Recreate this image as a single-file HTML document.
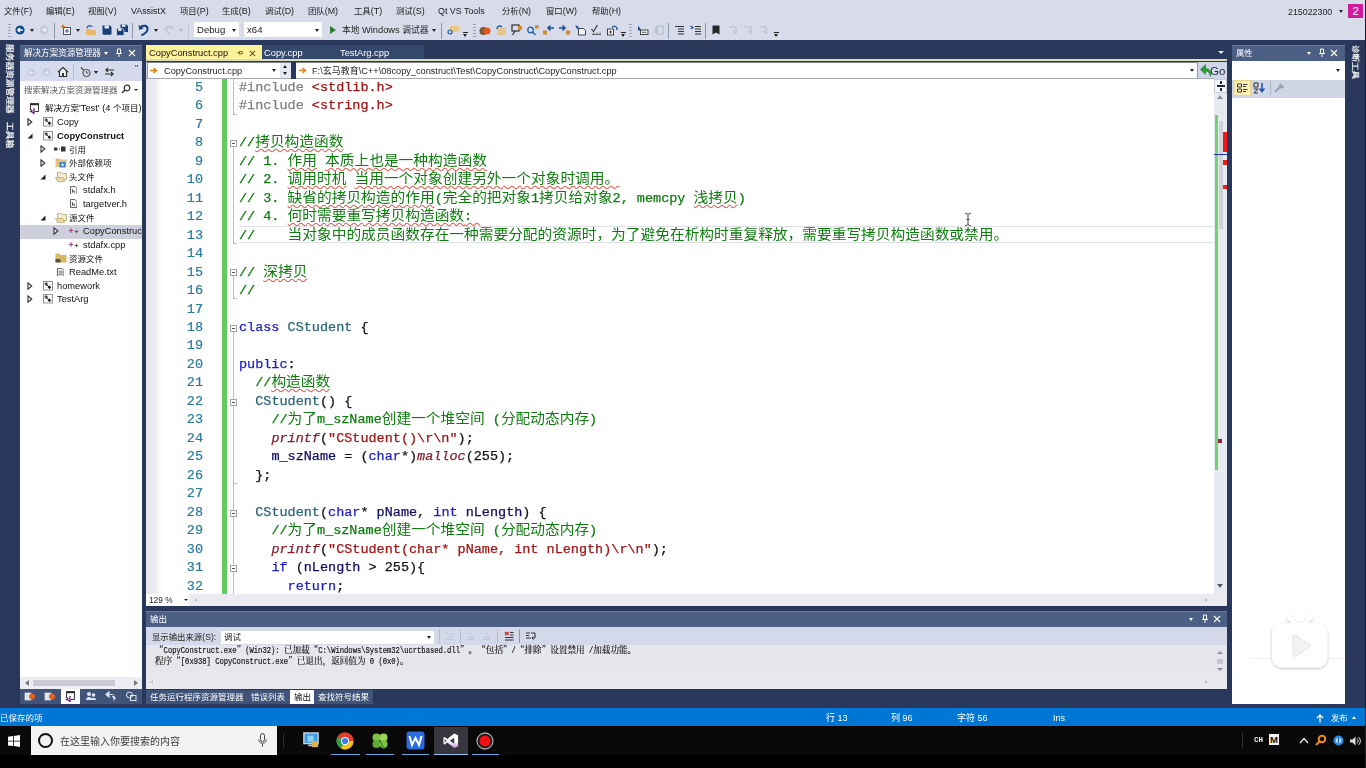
<!DOCTYPE html>
<html lang="zh-CN"><head><meta charset="utf-8"><title>CopyConstruct - Microsoft Visual Studio</title>
<style>

html,body{margin:0;padding:0}
body{width:1366px;height:768px;position:relative;overflow:hidden;background:#29375a;font-family:"Liberation Sans","Noto Sans CJK SC",sans-serif;font-size:9px;color:#1e1e1e;line-height:1}
div,span,svg{position:absolute;box-sizing:border-box}
#wrap{left:0;top:0;width:1366px;height:768px;overflow:hidden;filter:blur(0.45px)}
.t,.tree,.sb,.out,.menu{will-change:transform}
.t{white-space:nowrap;line-height:12px;height:12px}
.t span,.code span,.out span,.tree span,.sb span{position:static}
#top{left:0;top:0;width:1366px;height:40px;background:#d8dcea}
.menu{top:5px;font-size:8.9px;color:#1b1b1b}
.hdr{background:#4c5f84;color:#fff;border-top:1px solid #65789f}
.lav{background:#cfd6e5}
.white{background:#fff}
.code{left:239px;font-family:"Liberation Mono","Noto Sans CJK SC",monospace;font-size:12.45px;line-height:18.48px;height:18.48px;white-space:pre;color:#161616;-webkit-text-stroke:0.25px currentColor;transform:scaleX(1.0843);transform-origin:0 0}
.code .c{font-family:"Noto Sans CJK SC",sans-serif;font-size:13.57px;line-height:0;-webkit-text-stroke:0}
.ln{left:149.300px;width:54px;text-align:right;transform:scaleX(1.0843);transform-origin:100% 0;font-family:"Liberation Mono",monospace;font-size:12.45px;line-height:18.48px;height:18.48px;color:#2b7c9c;-webkit-text-stroke:0.2px currentColor}
.g{color:#0f7c0f}.k{color:#1c1cd4}.s{color:#a31515}.f{color:#87202c;font-style:italic}.ty{color:#2b6577}.v{color:#101068}.pp{color:#808080}
.sq{text-decoration:underline wavy #ea5a4e 0.9px;text-underline-offset:2px;text-decoration-skip-ink:none}
.tree{font-size:9.3px;color:#111;white-space:nowrap;line-height:13px;height:13px}
.out{font-family:"Liberation Mono","Noto Serif CJK SC",monospace;font-size:7.17px;color:#111;-webkit-text-stroke:0.15px #111;white-space:pre;line-height:11px;height:11px;transform:scaleY(1.18);transform-origin:0 55%}
.out .c{font-family:"Noto Serif CJK SC",serif;font-size:8.6px;line-height:9px;display:inline-block;transform:scaleY(0.847);transform-origin:0 62%;vertical-align:baseline}
.sb{color:#fff;font-size:9px;top:713px;white-space:nowrap;line-height:11px}

</style></head>
<body>
<div id="top">
<div class="t menu" style="left:4px"><span style="font-size:8.4px">文件</span>(F)</div>
<div class="t menu" style="left:46px"><span style="font-size:8.4px">编辑</span>(E)</div>
<div class="t menu" style="left:88px"><span style="font-size:8.4px">视图</span>(V)</div>
<div class="t menu" style="left:131px">VAssistX</div>
<div class="t menu" style="left:180px"><span style="font-size:8.4px">项目</span>(P)</div>
<div class="t menu" style="left:222px"><span style="font-size:8.4px">生成</span>(B)</div>
<div class="t menu" style="left:265px"><span style="font-size:8.4px">调试</span>(D)</div>
<div class="t menu" style="left:308px"><span style="font-size:8.4px">团队</span>(M)</div>
<div class="t menu" style="left:354px"><span style="font-size:8.4px">工具</span>(T)</div>
<div class="t menu" style="left:396px"><span style="font-size:8.4px">测试</span>(S)</div>
<div class="t menu" style="left:438px">Qt VS Tools</div>
<div class="t menu" style="left:502px"><span style="font-size:8.4px">分析</span>(N)</div>
<div class="t menu" style="left:546px"><span style="font-size:8.4px">窗口</span>(W)</div>
<div class="t menu" style="left:592px"><span style="font-size:8.4px">帮助</span>(H)</div>
<div class="t" style="left:1288px;top:5.700px;font-size:8.850px">215022300</div>
<div style="left:1338.600px;top:10px;border:2.5px solid transparent;border-top:3px solid #222"></div>
<div style="left:1348.400px;top:3.500px;width:14.400px;height:14.200px;background:#cf1a9c;color:#fff;font-size:11.500px;line-height:14.500px;text-align:center">2</div>
<div style="left:0;top:0.7px;width:1366px;height:39px">
<div style="left:8px;top:23px;width:3px;height:14px;background:repeating-linear-gradient(#9aa3b8 0 1px,transparent 1px 3px)"></div>
<svg style="left:15px;top:24px" width="10" height="10" viewBox="0 0 10 10"><circle cx="5" cy="5" r="4.6" fill="#0e4f8f"/><path d="M7.6 5H3M4.8 3L2.8 5l2 2" stroke="#fff" stroke-width="1.4" fill="none"/></svg>
<div class="dd" style="left:30px;top:28px;border:2.5px solid transparent;border-top:3px solid #222"></div>
<svg style="left:39px;top:24px" width="10" height="10" viewBox="0 0 10 10"><circle cx="5" cy="5" r="4.4" fill="#c3c8d6"/><path d="M2.4 5H7M5.2 3l2 2-2 2" stroke="#e6e9f2" stroke-width="1.4" fill="none"/></svg>
<div style="left:54px;top:22px;width:1px;height:16px;background:#8e97ab"></div>
<svg style="left:61px;top:23px" width="12" height="12" viewBox="0 0 12 12"><rect x="2.5" y="3.5" width="7" height="7" fill="#f4f6fb" stroke="#4a5568"/><path d="M2 0.5v4M0 2.5h4" stroke="#c27a1a" stroke-width="1.2"/><path d="M4 7h4M6 5v4" stroke="#4a5568" stroke-width="1"/></svg>
<div style="left:76px;top:28px;border:2.5px solid transparent;border-top:3px solid #222"></div>
<svg style="left:85px;top:23px" width="12" height="12" viewBox="0 0 12 12"><path d="M1 5h4l1 1h5v5H1z" fill="#e8b96a"/><path d="M2 4c1-3 4-3 5-1" stroke="#1c5fa8" stroke-width="1.4" fill="none"/></svg>
<svg style="left:102px;top:24px" width="10" height="10" viewBox="0 0 10 10"><path d="M0.5 0.5h7.5l1.5 1.5v7.5h-9z" fill="#153e7a"/><rect x="2.5" y="0.5" width="4.5" height="3" fill="#dfe5f3"/><rect x="2" y="5.5" width="6" height="4" fill="#153e7a"/></svg>
<svg style="left:116px;top:23px" width="13" height="12" viewBox="0 0 13 12"><path d="M4.5 0.5h6l1.5 1.5v6h-7.5z" fill="#153e7a"/><rect x="6" y="0.5" width="3.5" height="2.4" fill="#dfe5f3"/><path d="M0.5 4.5h6l1.5 1.5v5.500h-7.5z" fill="#153e7a" stroke="#d8dcea" stroke-width=".8"/><rect x="2.200" y="4.800" width="3.300" height="2.200" fill="#dfe5f3"/></svg>
<div style="left:132px;top:22px;width:1px;height:16px;background:#8e97ab"></div>
<svg style="left:138px;top:23px" width="12" height="13" viewBox="0 0 12 13"><path d="M2.500 3.200C5 0.500 10 1.500 9.500 5.500 9.200 8.500 6 10 3.500 11.500" stroke="#153e7a" stroke-width="2" fill="none"/><path d="M0.500 1l0.800 5 4.500-1.800z" fill="#153e7a"/></svg>
<div style="left:154px;top:28px;border:2.5px solid transparent;border-top:3px solid #222"></div>
<svg style="left:164px;top:24px" width="10" height="11" viewBox="0 0 12 13"><path d="M9.500 3.200C7 0.500 2 1.500 2.500 5.500 2.800 8.500 6 10 8.500 11.500" stroke="#c0c6d6" stroke-width="2" fill="none"/><path d="M11.500 1l-0.800 5-4.500-1.800z" fill="#c0c6d6"/></svg>
<div style="left:179px;top:28px;border:2.5px solid transparent;border-top:3px solid #a9afbf"></div>
<div style="left:188px;top:22px;width:1px;height:16px;background:#c3c9d8"></div>
<div style="left:194px;top:21.300px;width:45px;height:15.500px;background:#fff"></div>
<div class="t" style="left:197px;top:23.200px;font-size:9.6px">Debug</div>
<div style="left:232px;top:28px;border:2.5px solid transparent;border-top:3px solid #222"></div>
<div style="left:244px;top:21.300px;width:78px;height:15.500px;background:#fff"></div>
<div class="t" style="left:247px;top:23.200px;font-size:9.6px">x64</div>
<div style="left:315px;top:28px;border:2.5px solid transparent;border-top:3px solid #222"></div>
<div style="left:330px;top:25px;border:4px solid transparent;border-left:6px solid #2f7d32;border-right:0"></div>
<div class="t" style="left:342px;top:23.300px;font-size:9.3px"><span style="font-size:8.7px">本地</span> Windows <span style="font-size:8.7px">调试器</span></div>
<div style="left:432px;top:28px;border:2.5px solid transparent;border-top:3px solid #222"></div>
<div style="left:441px;top:22px;width:1px;height:16px;background:#8e97ab"></div>
<svg style="left:447px;top:23px" width="13" height="12" viewBox="0 0 13 12"><rect x="3" y="2" width="9" height="6" fill="#e8c98a"/><circle cx="3" cy="8" r="2" fill="none" stroke="#1c5fa8" stroke-width="1.2"/></svg>
<div style="left:463px;top:31px;width:5px;height:1px;background:#222"></div><div style="left:463px;top:33px;border:2.5px solid transparent;border-top:3px solid #222"></div>
<div style="left:473px;top:23px;width:3px;height:14px;background:repeating-linear-gradient(#9aa3b8 0 1px,transparent 1px 3px)"></div>
<svg style="left:479px;top:24px" width="12" height="11" viewBox="0 0 12 11"><circle cx="4.500" cy="6" r="4" fill="#7a5a3a"/><circle cx="8" cy="6" r="3.500" fill="#e2561e"/></svg>
<svg style="left:495px;top:23px" width="12" height="12" viewBox="0 0 12 12"><rect x="2" y="4" width="9" height="7" fill="#e8c58c"/><path d="M2 5c0-3 3-4 5-2" stroke="#1c5fa8" stroke-width="1.500" fill="none"/></svg>
<svg style="left:511px;top:23px" width="12" height="12" viewBox="0 0 12 12"><rect x="1" y="1" width="7" height="6" fill="none" stroke="#333" stroke-width="1.200"/><rect x="7" y="2" width="4" height="4" fill="#d08a2a"/><path d="M4 7L1.500 11" stroke="#333" stroke-width="1.300"/></svg>
<svg style="left:526px;top:23px" width="13" height="12" viewBox="0 0 13 12"><circle cx="4.500" cy="6" r="2.800" fill="none" stroke="#1c5fa8" stroke-width="1.300"/><path d="M6.500 8l3 3" stroke="#1c5fa8" stroke-width="1.400"/><rect x="9" y="1" width="3.500" height="3.500" fill="#d08a2a"/></svg>
<svg style="left:542px;top:23px" width="13" height="12" viewBox="0 0 13 12"><rect x="1" y="6.500" width="4" height="4" fill="#d08a2a"/><path d="M12 4H6.500M8.500 1.500L6 4l2.500 2.500" stroke="#1c4f9a" stroke-width="1.600" fill="none"/></svg>
<svg style="left:558px;top:23px" width="13" height="12" viewBox="0 0 13 12"><rect x="8" y="6.500" width="4" height="4" fill="#d08a2a"/><path d="M1 4h5.500M4.500 1.500L7 4 4.500 6.500" stroke="#1c4f9a" stroke-width="1.600" fill="none"/></svg>
<svg style="left:574px;top:23px" width="13" height="12" viewBox="0 0 13 12"><path d="M4.500 4.500h5l2 2v4.500h-7z" fill="#f2f4fa" stroke="#333" stroke-width=".9"/><path d="M1 1l2 4 2-2z" fill="#1c4f9a"/><path d="M2.500 2.500L5 6" stroke="#1c4f9a" stroke-width="1.200"/></svg>
<svg style="left:590px;top:23px" width="13" height="12" viewBox="0 0 13 12"><path d="M1.500 5l2 2.500 4-6.500" stroke="#3a3a3a" stroke-width="1.200" fill="none"/><path d="M2 10.500h9M4 8.500v2M7 8.500v2M10 8.500v2" stroke="#555" stroke-width=".9"/></svg>
<svg style="left:606px;top:23px" width="13" height="12" viewBox="0 0 13 12"><rect x="1.500" y="5" width="6" height="6" fill="#f2f4fa" stroke="#333" stroke-width=".9"/><path d="M3 8h3M4.500 6.500v3" stroke="#333" stroke-width=".9"/><path d="M6 3.500c2-2.500 5.500-1 5 2.500" stroke="#1c4f9a" stroke-width="1.300" fill="none"/></svg>
<div style="left:621px;top:31px;width:5px;height:1px;background:#222"></div><div style="left:621px;top:33px;border:2.5px solid transparent;border-top:3px solid #222"></div>
<div style="left:629px;top:23px;width:3px;height:14px;background:repeating-linear-gradient(#9aa3b8 0 1px,transparent 1px 3px)"></div>
<svg style="left:637px;top:24px" width="12" height="11" viewBox="0 0 12 11"><path d="M1 0.500l3.500 5h-3.500z" fill="#1c4f9a"/><rect x="3.500" y="5" width="7.500" height="4.500" fill="#f2f4fa" stroke="#333" stroke-width=".9"/><path d="M5 7.300h4.500" stroke="#333" stroke-width=".8"/></svg>
<svg style="left:653px;top:24px" width="12" height="11" viewBox="0 0 12 11" opacity=".45"><rect x="4" y="1" width="6" height="8" fill="none" stroke="#7c8499" stroke-width=".9"/><path d="M1 3h4M1 5h4M1 7h4" stroke="#7c8499" stroke-width=".9"/></svg>
<div style="left:668px;top:22px;width:1px;height:16px;background:#8e97ab"></div>
<svg style="left:674px;top:24px" width="11" height="10" viewBox="0 0 11 10"><path d="M1 1.500h9M4 4h6M4 6.500h6M4 9h6" stroke="#333" stroke-width="1"/></svg>
<svg style="left:690px;top:24px" width="12" height="10" viewBox="0 0 12 10"><path d="M5 1.500h6M5 4h6M5 6.500h6M5 9h6" stroke="#333" stroke-width="1"/><path d="M0.500 1l2.500 1.500L1 4" stroke="#1c4f9a" stroke-width="1.200" fill="none"/></svg>
<div style="left:705px;top:22px;width:1px;height:16px;background:#8e97ab"></div>
<svg style="left:712px;top:24px" width="8" height="10" viewBox="0 0 8 10"><path d="M0.500 0.500h7v9L4 7.500 0.500 9.500z" fill="#252525"/></svg>
<svg style="left:728px;top:25px" width="10" height="8" viewBox="0 0 10 8" opacity=".5"><path d="M1 1h7v6L5 5" stroke="#9aa1b4" stroke-width="1.200" fill="none"/></svg>
<svg style="left:743px;top:25px" width="10" height="8" viewBox="0 0 10 8" opacity=".5"><path d="M1 1h7v6L5 5" stroke="#9aa1b4" stroke-width="1.200" fill="none"/></svg>
<svg style="left:758px;top:25px" width="10" height="8" viewBox="0 0 10 8" opacity=".5"><path d="M1 1h7v6L5 5" stroke="#9aa1b4" stroke-width="1.200" fill="none"/></svg>
<div style="left:774px;top:31px;width:5px;height:1px;background:#222"></div><div style="left:774px;top:33px;border:2.5px solid transparent;border-top:3px solid #222"></div>
</div></div>
<div style="left:0;top:40px;width:20px;height:668px;background:#29375a"></div>
<div class="t" style="left:14.800px;top:44px;transform:rotate(90deg) scale(1,0.88);transform-origin:0 0;color:#fff;-webkit-text-stroke:.25px #fff;font-size:8.7px">服务器资源管理器</div>
<div class="t" style="left:14.800px;top:122px;transform:rotate(90deg) scale(1,0.88);transform-origin:0 0;color:#fff;-webkit-text-stroke:.25px #fff;font-size:8.7px">工具箱</div>
<div class="hdr" style="left:20px;top:45px;width:122px;height:16px"></div>
<div class="t" style="left:24px;top:47px;color:#fff;font-size:8.55px">解决方案资源管理器</div>
<div style="left:104px;top:52px;border:2.5px solid transparent;border-top:3px solid #fff"></div>
<svg style="left:115px;top:48px" width="8" height="10" viewBox="0 0 8 10"><path d="M2.500 1h3v4.500h-3zM1 5.500h6M4 5.500v3.500" stroke="#fff" stroke-width="1" fill="none"/></svg>
<svg style="left:128px;top:49px" width="8" height="8" viewBox="0 0 8 8"><path d="M1 1l6 6M7 1l-6 6" stroke="#fff" stroke-width="1.100"/></svg>
<div class="lav" style="left:20px;top:60.700px;width:122px;height:20.500px;background:#d5dbec"></div>
<svg style="left:27px;top:68px" width="9" height="9" viewBox="0 0 10 10"><circle cx="5" cy="5" r="4.200" fill="#c5cad8"/><path d="M7.400 5H3M4.800 3L2.800 5l2 2" stroke="#e9ecf4" stroke-width="1.300" fill="none"/></svg>
<svg style="left:42px;top:68px" width="9" height="9" viewBox="0 0 10 10"><circle cx="5" cy="5" r="4.200" fill="#c5cad8"/><path d="M2.600 5H7M5.200 3l2 2-2 2" stroke="#e9ecf4" stroke-width="1.300" fill="none"/></svg>
<svg style="left:57px;top:66px" width="12" height="11" viewBox="0 0 12 11"><path d="M1 6l5-4.500L11 6M2.500 5.500v5h7v-5" stroke="#333" stroke-width="1.200" fill="#f5f6fa"/><rect x="5" y="7" width="2" height="3.500" fill="#333"/></svg>
<div style="left:73px;top:64px;width:1px;height:15px;background:#b4bccd"></div>
<svg style="left:80px;top:66px" width="12" height="12" viewBox="0 0 12 12"><circle cx="6.500" cy="7" r="3.600" fill="none" stroke="#444" stroke-width="1"/><path d="M6.500 5v2h1.800" stroke="#444" stroke-width=".9" fill="none"/><path d="M1 1.500l2.500 2.500" stroke="#444" stroke-width="1.200"/></svg>
<div style="left:94px;top:71px;border:2.5px solid transparent;border-top:3px solid #222"></div>
<svg style="left:104px;top:67px" width="11" height="10" viewBox="0 0 11 10"><path d="M10 3H2M4 1L2 3l2 2M1 7h8M7 5l2 2-2 2" stroke="#333" stroke-width="1.200" fill="none"/></svg>
<div class="t" style="left:135px;top:62px;font-size:9px;color:#333">"</div>
<div class="white" style="left:20px;top:81px;width:122px;height:16.500px;border-bottom:1px solid #d5dae6"></div>
<div class="t" style="left:24px;top:84px;font-size:8.500px;color:#5a5a5a">搜索解决方案资源管理器</div>
<svg style="left:120.800px;top:84px" width="10" height="10" viewBox="0 0 10 10"><circle cx="6" cy="4" r="2.800" fill="none" stroke="#333" stroke-width="1.200"/><path d="M4 6L1 9" stroke="#333" stroke-width="1.500"/></svg>
<div style="left:134px;top:89px;border:2px solid transparent;border-top:2.500px solid #222"></div>
<div class="white" style="left:20px;top:97px;width:122px;height:581px"></div>
<div style="left:20px;top:224.500px;width:122px;height:14px;background:#cdd0dc"></div>
<div style="left:21px;top:97px;width:121px;height:581px;overflow:hidden">
<svg style="left:8.3px;top:5.7px" width="11" height="11" viewBox="0 0 11 11"><path d="M1.500 6V1h8v7.500H6" fill="#fff" stroke="#3a3a3a" stroke-width="1"/><path d="M1 1.200h9" stroke="#2a2a2a" stroke-width="2"/><path d="M0.800 6l2 1.500-2 1.500M5 5v5.500L2.500 8.500" stroke="#68217a" stroke-width="1.300" fill="none"/></svg>
<div class="tree" style="left:23.5px;top:5.4px;"><span style="font-size:8.5px">解决方案</span>'Test' (4 <span style="font-size:8.5px">个项目</span>)</div>
<svg style="left:6px;top:21.0px" width="6" height="8" viewBox="0 0 6 8"><path d="M1 0.800L4.800 4 1 7.200z" fill="#fff" stroke="#2e2e2e" stroke-width="1.100"/></svg>
<svg style="left:21.8px;top:20.0px" width="10" height="10" viewBox="0 0 10 10"><rect x="0.500" y="0.500" width="9" height="8.500" fill="#fff" stroke="#8a8a8a" stroke-width=".9"/><path d="M1.500 3h3.400M3.200 1.300v3.400M4.800 6.300h3.400M6.500 4.600v3.400" stroke="#222" stroke-width="1.200"/><path d="M3.500 3.500l3 3" stroke="#222" stroke-width=".9"/></svg>
<div class="tree" style="left:36.0px;top:19.2px;">Copy</div>
<svg style="left:6px;top:35.8px" width="6" height="6" viewBox="0 0 6 6"><path d="M5.500 0.500v5h-5z" fill="#222"/></svg>
<svg style="left:21.8px;top:33.8px" width="10" height="10" viewBox="0 0 10 10"><rect x="0.500" y="0.500" width="9" height="8.500" fill="#fff" stroke="#8a8a8a" stroke-width=".9"/><path d="M1.500 3h3.400M3.200 1.300v3.400M4.800 6.300h3.400M6.500 4.600v3.400" stroke="#222" stroke-width="1.200"/><path d="M3.500 3.500l3 3" stroke="#222" stroke-width=".9"/></svg>
<div class="tree" style="left:36.0px;top:33.0px;font-weight:bold;">CopyConstruct</div>
<svg style="left:19px;top:48.3px" width="6" height="8" viewBox="0 0 6 8"><path d="M1 0.800L4.800 4 1 7.200z" fill="#fff" stroke="#2e2e2e" stroke-width="1.100"/></svg>
<svg style="left:33px;top:49.3px" width="12" height="6" viewBox="0 0 12 6"><rect x="0" y="1.500" width="3" height="3" fill="#333"/><rect x="7" y="0.500" width="4.500" height="5" fill="#333"/><path d="M3 3h4" stroke="#333" stroke-width="1" stroke-dasharray="1 1"/></svg>
<div class="tree" style="left:47.9px;top:46.5px;"><span style="font-size:8.5px">引用</span></div>
<svg style="left:19px;top:61.9px" width="6" height="8" viewBox="0 0 6 8"><path d="M1 0.800L4.800 4 1 7.200z" fill="#fff" stroke="#2e2e2e" stroke-width="1.100"/></svg>
<svg style="left:34px;top:60.4px" width="12" height="11" viewBox="0 0 12 11"><path d="M0.500 1.500h4l1 1h6v7.500h-11z" fill="#e4c27e"/><rect x="4.500" y="5" width="6" height="5.500" fill="#3b82c4"/><path d="M6 7.800h3M7.500 6.300v3" stroke="#fff" stroke-width=".9"/></svg>
<div class="tree" style="left:47.9px;top:60.1px;"><span style="font-size:8.5px">外部依赖项</span></div>
<svg style="left:19px;top:76.6px" width="6" height="6" viewBox="0 0 6 6"><path d="M5.500 0.500v5h-5z" fill="#222"/></svg>
<svg style="left:34px;top:74.6px" width="12" height="10" viewBox="0 0 12 10"><path d="M2.500 0.500h4l1 1h4v6h-9z" fill="#f3ead3" stroke="#b9a36a" stroke-width=".8"/><path d="M0.500 5.500l2 4h7l-1.500-4z" fill="#e9d9a6" stroke="#b9a36a" stroke-width=".7"/></svg>
<div class="tree" style="left:47.9px;top:73.8px;"><span style="font-size:8.5px">头文件</span></div>
<svg style="left:48.7px;top:88.6px" width="7.500" height="8.800" viewBox="0 0 9 11"><path d="M0.500 0.500h5.500l2.500 2.500v7.500h-8z" fill="#fff" stroke="#444" stroke-width="1.100"/><path d="M3 4v4.500M3 6.500h2.500v2" stroke="#444" stroke-width="1.100" fill="none"/></svg>
<div class="tree" style="left:61.7px;top:87.4px;">stdafx.h</div>
<svg style="left:48.7px;top:102.3px" width="7.500" height="8.800" viewBox="0 0 9 11"><path d="M0.500 0.500h5.500l2.500 2.500v7.500h-8z" fill="#fff" stroke="#444" stroke-width="1.100"/><path d="M3 4v4.500M3 6.500h2.500v2" stroke="#444" stroke-width="1.100" fill="none"/></svg>
<div class="tree" style="left:61.7px;top:101.1px;">targetver.h</div>
<svg style="left:19px;top:117.5px" width="6" height="6" viewBox="0 0 6 6"><path d="M5.500 0.500v5h-5z" fill="#222"/></svg>
<svg style="left:34px;top:115.5px" width="12" height="10" viewBox="0 0 12 10"><path d="M2.500 0.500h4l1 1h4v6h-9z" fill="#f3ead3" stroke="#b9a36a" stroke-width=".8"/><path d="M0.500 5.500l2 4h7l-1.500-4z" fill="#e9d9a6" stroke="#b9a36a" stroke-width=".7"/></svg>
<div class="tree" style="left:47.9px;top:114.7px;"><span style="font-size:8.5px">源文件</span></div>
<svg style="left:32px;top:130.1px" width="6" height="8" viewBox="0 0 6 8"><path d="M1 0.800L4.800 4 1 7.200z" fill="#fff" stroke="#2e2e2e" stroke-width="1.100"/></svg>
<svg style="left:47px;top:130.1px" width="12" height="8" viewBox="0 0 12 8"><path d="M3 1.200v4.600M0.700 3.500h4.600" stroke="#9a4a86" stroke-width="1.200"/><path d="M8.500 2.700v3.600M6.700 4.500h3.600" stroke="#666" stroke-width="1.100"/></svg>
<div class="tree" style="left:61.7px;top:128.3px;">CopyConstruct.cpp</div>
<svg style="left:47px;top:143.8px" width="12" height="8" viewBox="0 0 12 8"><path d="M3 1.200v4.600M0.700 3.500h4.600" stroke="#9a4a86" stroke-width="1.200"/><path d="M8.500 2.700v3.600M6.700 4.500h3.600" stroke="#666" stroke-width="1.100"/></svg>
<div class="tree" style="left:61.7px;top:142.0px;">stdafx.cpp</div>
<svg style="left:34px;top:156.4px" width="12" height="10" viewBox="0 0 12 10"><path d="M0.500 0.500h4l1 1.500h6v7.500h-11z" fill="#dcb765"/><path d="M0.500 6h5v3.500h-5z" fill="#555"/></svg>
<div class="tree" style="left:47.9px;top:155.6px;"><span style="font-size:8.5px">资源文件</span></div>
<svg style="left:35.7px;top:170.6px" width="7.500" height="8.800" viewBox="0 0 9 11"><path d="M0.500 0.500h5.500l2.500 2.500v7.500h-8z" fill="#fff" stroke="#444" stroke-width="1.100"/><path d="M2 4h5M2 6h5M2 8h5" stroke="#444" stroke-width=".9"/></svg>
<div class="tree" style="left:47.9px;top:169.2px;">ReadMe.txt</div>
<svg style="left:6px;top:184.6px" width="6" height="8" viewBox="0 0 6 8"><path d="M1 0.800L4.800 4 1 7.200z" fill="#fff" stroke="#2e2e2e" stroke-width="1.100"/></svg>
<svg style="left:21.8px;top:183.6px" width="10" height="10" viewBox="0 0 10 10"><rect x="0.500" y="0.500" width="9" height="8.500" fill="#fff" stroke="#8a8a8a" stroke-width=".9"/><path d="M1.500 3h3.400M3.200 1.300v3.400M4.800 6.300h3.400M6.500 4.600v3.400" stroke="#222" stroke-width="1.200"/><path d="M3.500 3.500l3 3" stroke="#222" stroke-width=".9"/></svg>
<div class="tree" style="left:36.0px;top:182.8px;">homework</div>
<svg style="left:6px;top:198.2px" width="6" height="8" viewBox="0 0 6 8"><path d="M1 0.800L4.800 4 1 7.200z" fill="#fff" stroke="#2e2e2e" stroke-width="1.100"/></svg>
<svg style="left:21.8px;top:197.2px" width="10" height="10" viewBox="0 0 10 10"><rect x="0.500" y="0.500" width="9" height="8.500" fill="#fff" stroke="#8a8a8a" stroke-width=".9"/><path d="M1.500 3h3.400M3.200 1.300v3.400M4.800 6.300h3.400M6.500 4.600v3.400" stroke="#222" stroke-width="1.200"/><path d="M3.500 3.500l3 3" stroke="#222" stroke-width=".9"/></svg>
<div class="tree" style="left:36.0px;top:196.4px;">TestArg</div>
</div>
<div style="left:20px;top:677px;width:122px;height:12px;background:#edeef4"></div>
<div style="left:33px;top:679.500px;width:82px;height:6px;background:#c9cad3"></div>
<div style="left:25px;top:679.500px;border:3px solid transparent;border-right:4px solid #777;border-left:0"></div>
<div style="left:134px;top:679.500px;border:3px solid transparent;border-left:4px solid #777;border-right:0"></div>
<div style="left:20px;top:689px;width:122px;height:14.800px;background:#3f5478"></div>
<div style="left:61px;top:689px;width:19.300px;height:14.800px;background:#fff"></div>

<svg style="left:24px;top:691px" width="12" height="10" viewBox="0 0 12 10"><rect x="1" y="2" width="6" height="7" fill="#dfe3ee" stroke="#f0f0f0" stroke-width=".6"/><circle cx="8" cy="5.500" r="3" fill="#e2622a"/></svg>
<svg style="left:44px;top:691px" width="12" height="10" viewBox="0 0 12 10"><rect x="1" y="2" width="6" height="7" fill="#dfe3ee" stroke="#f0f0f0" stroke-width=".6"/><circle cx="8" cy="5.500" r="3" fill="#e2622a"/></svg>
<svg style="left:65px;top:691px" width="11" height="11" viewBox="0 0 11 11"><path d="M1.500 6V1h8v7.500H6" fill="#fff" stroke="#3a3a3a" stroke-width="1"/><path d="M1 1.200h9" stroke="#2a2a2a" stroke-width="2"/><path d="M0.800 6l2 1.500-2 1.500M5 5v5.500L2.500 8.500" stroke="#68217a" stroke-width="1.300" fill="none"/></svg>
<svg style="left:85px;top:691px" width="12" height="10" viewBox="0 0 12 10"><circle cx="4" cy="3" r="2" fill="#dfe6f5"/><circle cx="8.500" cy="4" r="1.800" fill="#dfe6f5"/><path d="M1 9c0-4 6-4 6 0zM6 9c0-3 5-3 5 0z" fill="#dfe6f5"/></svg>
<svg style="left:105px;top:691px" width="12" height="10" viewBox="0 0 12 10"><path d="M1 3.500l3-2.500v5zM5 3.500h3M7 5.500l4 2M9 4.500v5" stroke="#dfe6f5" stroke-width="1.200" fill="#dfe6f5"/></svg>
<svg style="left:125px;top:691px" width="12" height="10" viewBox="0 0 12 10"><circle cx="4.500" cy="4" r="3" fill="none" stroke="#dfe6f5" stroke-width="1"/><rect x="5.500" y="4.500" width="5.500" height="5" fill="none" stroke="#dfe6f5" stroke-width="1"/></svg>
<div style="left:262px;top:45px;width:162px;height:15px;background:#33486b"></div>
<div style="left:146px;top:44.500px;width:115.500px;height:16px;background:#fff29d"></div>
<div class="t" style="left:149px;top:47px;font-size:9.300px;color:#111">CopyConstruct.cpp</div>
<svg style="left:236.500px;top:50px" width="6.500" height="5.500" viewBox="0 0 8 6"><path d="M0 3h3M3 1v4M3 1.500h3.500v3H3" stroke="#6a5c1c" stroke-width="1.100" fill="none"/></svg>
<svg style="left:249.200px;top:49.500px" width="7" height="7" viewBox="0 0 8 8"><path d="M1 1l6 6M7 1l-6 6" stroke="#5f5424" stroke-width="1.200"/></svg>
<div class="t" style="left:264px;top:47px;font-size:9.300px;color:#fff">Copy.cpp</div>
<div class="t" style="left:340px;top:47px;font-size:9.300px;color:#fff">TestArg.cpp</div>
<div style="left:1218px;top:51px;border:3px solid transparent;border-top:3.500px solid #dfe5f2"></div>
<div style="left:146px;top:59.300px;width:1081.200px;height:2.200px;background:#dddcb8"></div>
<div style="left:146px;top:61.500px;width:1081.200px;height:18px;background:#cfd6e5"></div>
<div style="left:146px;top:78.300px;width:1068px;height:1.400px;background:#a4a9b4"></div>
<div style="left:146.500px;top:61.500px;width:133px;height:16.800px;background:#fff;border-left:1px solid #8e99ad;border-top:1px solid #7d8595"></div>
<div style="left:279.500px;top:61.500px;width:11.700px;height:16.800px;background:#e6e9f2;border-top:1px solid #7d8595"></div>
<div style="left:291.200px;top:61.500px;width:4.400px;height:18px;background:#2b3660"></div>
<div style="left:283px;top:65px;border:2.500px solid transparent;border-bottom:3px solid #222;border-top:0"></div>
<div style="left:283px;top:72.300px;border:2.500px solid transparent;border-top:3px solid #222;border-bottom:0"></div>
<div style="left:295.600px;top:61.500px;width:902.400px;height:16.800px;background:#fff;border-top:1px solid #7d8595;border-right:1px solid #8e99ad"></div>
<div style="left:271.500px;top:69px;border:2.500px solid transparent;border-top:3px solid #222"></div>
<svg style="left:150px;top:67px" width="8" height="7" viewBox="0 0 8 7"><path d="M0 3.500h6M3.500 1L6.500 3.500 3.500 6" stroke="#d8841c" stroke-width="1.400" fill="none"/></svg>
<div class="t" style="left:164px;top:65px;font-size:9.200px">CopyConstruct.cpp</div>
<svg style="left:299px;top:67px" width="8" height="7" viewBox="0 0 8 7"><path d="M0 3.500h6M3.500 1L6.500 3.500 3.500 6" stroke="#d8841c" stroke-width="1.400" fill="none"/></svg>
<div class="t" style="left:312px;top:65px;font-size:9.200px">F:\<span style="font-size:9px">玄马教育</span>\C++\08copy_construct\Test\CopyConstruct\CopyConstruct.cpp</div>
<div style="left:1190px;top:69px;border:2.500px solid transparent;border-top:3px solid #222"></div>
<svg style="left:1199.500px;top:63px" width="12" height="14" viewBox="0 0 12 14"><path d="M10.500 13.500C11.500 8.500 9.500 5.500 5.500 5.500V1.500L0.500 6.500l5 5V8C8 8 9.500 10 10.500 13.500z" fill="#2e9a36" stroke="#1f7a28" stroke-width=".6"/></svg>
<div class="t" style="left:1210px;top:64px;font-size:11.500px;color:#1e2a44;line-height:14px;height:14px">Go</div>
<div id="codebg" style="left:146px;top:79px;width:1068px;height:514.5px;background:#fff"></div>
<div style="left:146px;top:79px;width:16px;height:514.5px;background:linear-gradient(90deg,#e6e7ee 0,#ececf2 55%,#fff 100%)"></div>
<div style="left:222px;top:79px;width:5px;height:514.5px;background:#62cc62"></div>
<div id="code" style="left:0;top:79px;width:1214px;height:514.5px;overflow:hidden">
<div style="left:239px;top:147.00px;width:975px;height:16.60px;border:1px solid #e0e0e6;border-right:0;border-left:0"></div>
<div class="ln" style="top:-0.24px">5</div><div class="code" style="top:-0.24px"><span class="pp">#include</span> <span class="s">&lt;stdlib.h&gt;</span></div>
<div class="ln" style="top:18.24px">6</div><div class="code" style="top:18.24px"><span class="pp">#include</span> <span class="s">&lt;string.h&gt;</span></div>
<div class="ln" style="top:36.72px">7</div>
<div class="ln" style="top:55.20px">8</div><div class="code" style="top:55.20px"><span class="g">//<span class="sq"><span class="c">拷贝构造函数</span></span></span></div>
<div class="ln" style="top:73.68px">9</div><div class="code" style="top:73.68px"><span class="g">// 1. <span class="sq"><span class="c">作用</span></span> <span class="sq"><span class="c">本质上也是一种构造函数</span></span></span></div>
<div class="ln" style="top:92.16px">10</div><div class="code" style="top:92.16px"><span class="g">// 2. <span class="sq"><span class="c">调用时机</span></span> <span class="sq"><span class="c">当用一个对象创建另外一个对象时调用。</span></span></span></div>
<div class="ln" style="top:110.64px">11</div><div class="code" style="top:110.64px"><span class="g">// 3. <span class="sq"><span class="c">缺省的拷贝构造的作用</span></span>(<span class="c">完全的把对象</span>1<span class="c">拷贝给对象</span>2, memcpy <span class="sq"><span class="c">浅拷贝</span></span>)</span></div>
<div class="ln" style="top:129.12px">12</div><div class="code" style="top:129.12px"><span class="g">// 4. <span class="sq"><span class="c">何时需要重写拷贝构造函数</span>: </span></span></div>
<div class="ln" style="top:147.60px">13</div><div class="code" style="top:147.60px"><span class="g">//    <span class="c">当对象中的成员函数存在一种需要分配的资源时，为了避免在析构时重复释放，需要重写拷贝构造函数或禁用。</span></span></div>
<div class="ln" style="top:166.08px">14</div>
<div class="ln" style="top:184.56px">15</div><div class="code" style="top:184.56px"><span class="g">// <span class="sq"><span class="c">深拷贝</span></span></span></div>
<div class="ln" style="top:203.04px">16</div><div class="code" style="top:203.04px"><span class="g">//</span></div>
<div class="ln" style="top:221.52px">17</div>
<div class="ln" style="top:240.00px">18</div><div class="code" style="top:240.00px"><span class="k">class</span> <span class="ty">CStudent</span> {</div>
<div class="ln" style="top:258.48px">19</div>
<div class="ln" style="top:276.96px">20</div><div class="code" style="top:276.96px"><span class="k">public</span>:</div>
<div class="ln" style="top:295.44px">21</div><div class="code" style="top:295.44px">  <span class="g">//<span class="sq"><span class="c">构造函数</span></span></span></div>
<div class="ln" style="top:313.92px">22</div><div class="code" style="top:313.92px">  <span class="ty">CStudent</span>() {</div>
<div class="ln" style="top:332.40px">23</div><div class="code" style="top:332.40px">    <span class="g">//<span class="c">为了</span>m_szName<span class="c">创建一个堆空间</span> (<span class="c">分配动态内存</span>)</span></div>
<div class="ln" style="top:350.88px">24</div><div class="code" style="top:350.88px">    <span class="f">printf</span>(<span class="s">"CStudent()\r\n"</span>);</div>
<div class="ln" style="top:369.36px">25</div><div class="code" style="top:369.36px">    <span class="v">m_szName</span> = (<span class="k">char</span>*)<span class="f">malloc</span>(255);</div>
<div class="ln" style="top:387.84px">26</div><div class="code" style="top:387.84px">  };</div>
<div class="ln" style="top:406.32px">27</div>
<div class="ln" style="top:424.80px">28</div><div class="code" style="top:424.80px">  <span class="ty">CStudent</span>(<span class="k">char</span>* <span class="v">pName</span>, <span class="k">int</span> <span class="v">nLength</span>) {</div>
<div class="ln" style="top:443.28px">29</div><div class="code" style="top:443.28px">    <span class="g">//<span class="c">为了</span>m_szName<span class="c">创建一个堆空间</span> (<span class="c">分配动态内存</span>)</span></div>
<div class="ln" style="top:461.76px">30</div><div class="code" style="top:461.76px">    <span class="f">printf</span>(<span class="s">"CStudent(char* pName, int nLength)\r\n"</span>);</div>
<div class="ln" style="top:480.24px">31</div><div class="code" style="top:480.24px">    <span class="k">if</span> (<span class="v">nLength</span> &gt; 255){</div>
<div class="ln" style="top:498.72px">32</div><div class="code" style="top:498.72px">      <span class="k">return</span>;</div>
<div style="left:233px;top:0.0px;width:1px;height:34.5px;background:#bdbdbd"></div>
<div style="left:233px;top:34.5px;width:4px;height:1px;background:#bdbdbd"></div>
<div style="left:233px;top:64.4px;width:1px;height:99.4px;background:#bdbdbd"></div>
<div style="left:233px;top:163.8px;width:4px;height:1px;background:#bdbdbd"></div>
<div style="left:230px;top:60.9px;width:7px;height:7px;border:1px solid #a4a4a4;background:#fff"></div><div style="left:232px;top:63.9px;width:3px;height:1px;background:#555"></div>
<div style="left:233px;top:193.8px;width:1px;height:25.5px;background:#bdbdbd"></div>
<div style="left:233px;top:219.3px;width:4px;height:1px;background:#bdbdbd"></div>
<div style="left:230px;top:190.3px;width:7px;height:7px;border:1px solid #a4a4a4;background:#fff"></div><div style="left:232px;top:193.3px;width:3px;height:1px;background:#555"></div>
<div style="left:233px;top:249.2px;width:1px;height:265.8px;background:#bdbdbd"></div>
<div style="left:230px;top:245.7px;width:7px;height:7px;border:1px solid #a4a4a4;background:#fff"></div><div style="left:232px;top:248.7px;width:3px;height:1px;background:#555"></div>
<div style="left:230px;top:319.7px;width:7px;height:7px;border:1px solid #a4a4a4;background:#fff"></div><div style="left:232px;top:322.7px;width:3px;height:1px;background:#555"></div>
<div style="left:233px;top:404.1px;width:4px;height:1px;background:#bdbdbd"></div>
<div style="left:230px;top:430.5px;width:7px;height:7px;border:1px solid #a4a4a4;background:#fff"></div><div style="left:232px;top:433.5px;width:3px;height:1px;background:#555"></div>
<div style="left:230px;top:486.0px;width:7px;height:7px;border:1px solid #a4a4a4;background:#fff"></div><div style="left:232px;top:489.0px;width:3px;height:1px;background:#555"></div>
</div>
<div style="left:1214px;top:79px;width:13.200px;height:515px;background:#e8eaf2"></div>
<div style="left:1214px;top:79px;width:13.200px;height:14px;background:#f6f7fb;border:1px solid #c8ccd8"></div>
<div style="left:1217px;top:85px;width:8px;height:1.500px;background:#1e2a44"></div><div style="left:1220px;top:81px;width:2px;height:3px;background:#1e2a44"></div><div style="left:1220px;top:88px;width:2px;height:3px;background:#1e2a44"></div>
<div style="left:1217px;top:95px;border:3.500px solid transparent;border-bottom:4px solid #8b90a0;border-top:0"></div>
<div style="left:1217px;top:584px;border:3.500px solid transparent;border-top:4px solid #555b6b;border-bottom:0"></div>
<div style="left:1214.700px;top:114.500px;width:3.300px;height:355.500px;background:#76d076"></div>
<div style="left:1218.600px;top:121px;width:4.700px;height:108px;background:#cfd0d8"></div>
<div style="left:1222.500px;top:132.400px;width:4px;height:20px;background:#f01818"></div>
<div style="left:1214px;top:154px;width:12.500px;height:1px;background:#2233aa"></div>
<div style="left:1222.500px;top:160.300px;width:4px;height:4.400px;background:#f01818"></div>
<div style="left:1222.500px;top:185px;width:4px;height:4.400px;background:#f01818"></div>
<div style="left:1218px;top:439px;width:4px;height:4px;background:#9a2040"></div>
<div style="left:146px;top:593.5px;width:1081.200px;height:12px;background:#eaebf0"></div>
<div style="left:146px;top:594px;width:42.500px;height:11.500px;background:#fff"></div>
<div class="t" style="left:149px;top:594px;font-size:8.300px">129 %</div>
<div style="left:183.500px;top:599px;border:2px solid transparent;border-top:2.500px solid #222"></div>
<div style="left:194px;top:598px;border:2.500px solid transparent;border-right:3px solid #c0c4d0;border-left:0"></div>
<div style="left:1205px;top:598px;border:2.500px solid transparent;border-left:3px solid #c0c4d0;border-right:0"></div>
<div class="hdr" style="left:1232px;top:45px;width:113px;height:16px"></div>
<div class="t" style="left:1236px;top:47px;color:#fff;font-size:8.300px">属性</div>
<div style="left:1307px;top:52px;border:2.500px solid transparent;border-top:3px solid #fff"></div>
<svg style="left:1318px;top:48px" width="8" height="10" viewBox="0 0 8 10"><path d="M2.500 1h3v4.500h-3zM1 5.500h6M4 5.500v3.500" stroke="#fff" stroke-width="1" fill="none"/></svg>
<svg style="left:1330px;top:49px" width="8" height="8" viewBox="0 0 8 8"><path d="M1 1l6 6M7 1l-6 6" stroke="#fff" stroke-width="1.100"/></svg>
<div class="white" style="left:1232px;top:61px;width:113px;height:18.500px"></div>
<div style="left:1336px;top:69px;border:2.500px solid transparent;border-top:3px solid #222"></div>
<div class="lav" style="left:1232px;top:79.500px;width:113px;height:18px"></div>
<div style="left:1234px;top:80px;width:17px;height:16px;background:#fdf0b8;border:1px solid #e8d488"></div>
<svg style="left:1237px;top:83px" width="11" height="10" viewBox="0 0 11 10"><path d="M0.500 1h4v3h-4zM0.500 6h4v3h-4z" fill="none" stroke="#3a3a3a" stroke-width="1"/><path d="M6 1.500h4.500M6 3.500h3M6 6.500h4.500M6 8.500h3" stroke="#3a3a3a" stroke-width="1"/></svg>
<svg style="left:1253px;top:82px" width="12" height="12" viewBox="0 0 12 12"><path d="M1 1h4v4H1zM1 7h4L1 11h4" stroke="#333" stroke-width="1" fill="none"/><path d="M9 1v8M6.500 6.500L9 9.500l2.500-3" stroke="#1c4fb0" stroke-width="1.500" fill="none"/></svg>
<div style="left:1270px;top:81px;width:1px;height:14px;background:#aab2c4"></div>
<svg style="left:1274px;top:83px" width="11" height="10" viewBox="0 0 11 10"><path d="M1 9l5-5" stroke="#9aa0b0" stroke-width="2"/><circle cx="7.500" cy="3" r="2.500" fill="#9aa0b0"/><rect x="7.500" y="0" width="3" height="2.500" fill="#cfd6e5"/></svg>
<div class="white" style="left:1232px;top:97.500px;width:113px;height:606.500px"></div>
<div class="t" style="left:1360.600px;top:44.500px;transform:rotate(90deg) scale(1,0.88);transform-origin:0 0;color:#fff;-webkit-text-stroke:.25px #fff;font-size:8.500px">诊断工具</div>
<div class="hdr" style="left:146px;top:610.5px;width:1081.200px;height:16.300px"></div>
<div class="t" style="left:150px;top:613px;color:#fff;font-size:8.500px">输出</div>
<div style="left:1189px;top:618px;border:2.500px solid transparent;border-top:3px solid #fff"></div>
<svg style="left:1201px;top:614px" width="8" height="10" viewBox="0 0 8 10"><path d="M2.500 1h3v4.500h-3zM1 5.500h6M4 5.500v3.500" stroke="#fff" stroke-width="1" fill="none"/></svg>
<svg style="left:1213px;top:615px" width="8" height="8" viewBox="0 0 8 8"><path d="M1 1l6 6M7 1l-6 6" stroke="#fff" stroke-width="1.100"/></svg>
<div class="lav" style="left:146px;top:626.800px;width:1081.200px;height:18.700px;background:#d3d9e8"></div>
<div class="t" style="left:152px;top:631px;font-size:8.700px;color:#1e1e1e"><span style="font-size:8.4px">显示输出来源</span>(S):</div>
<div class="white" style="left:221px;top:630.5px;width:213px;height:13px"></div>
<div class="t" style="left:224px;top:631px;font-size:8.500px">调试</div>
<div style="left:427px;top:636px;border:2.500px solid transparent;border-top:3px solid #222"></div>
<div style="left:439px;top:629px;width:1px;height:14px;background:#b4bccc"></div>
<svg style="left:445px;top:631px" width="10" height="10" viewBox="0 0 10 10" opacity=".55"><path d="M1 8.500h8M3 6h5M5 3.500h3M2 2l2 2" stroke="#aeb5c6" stroke-width="1"/></svg>
<div style="left:460px;top:629px;width:1px;height:14px;background:#b4bccc"></div>
<svg style="left:466px;top:631px" width="10" height="10" viewBox="0 0 10 10" opacity=".55"><path d="M1 8.500h8M3 6h5M4 2l2 2" stroke="#aeb5c6" stroke-width="1"/></svg>
<svg style="left:482px;top:631px" width="10" height="10" viewBox="0 0 10 10" opacity=".55"><path d="M1 8.500h8M3 6h5M4 4l2-2" stroke="#aeb5c6" stroke-width="1"/></svg>
<div style="left:497px;top:629px;width:1px;height:14px;background:#b4bccc"></div>
<svg style="left:504px;top:631px" width="10" height="10" viewBox="0 0 10 10"><path d="M1 1l3.500 3M4.500 1L1 4" stroke="#c81e1e" stroke-width="1.200"/><path d="M6 1.500h3.500M6 4h3.500M1 6.500h8.500M1 9h8.500" stroke="#333" stroke-width="1"/></svg>
<div style="left:519px;top:629px;width:1px;height:14px;background:#8e97ab"></div>
<svg style="left:525px;top:631px" width="11" height="10" viewBox="0 0 11 10"><path d="M1 2h4M1 4.500h3M1 7h5" stroke="#333" stroke-width="1"/><path d="M6 2h4v5H7M8.500 5.500L7 7l1.500 1.500" stroke="#333" stroke-width="1" fill="none"/></svg>
<div style="left:146px;top:645px;width:1081.200px;height:43.500px;background:#e6e7ec"></div>
<div class="out" style="left:155.4px;top:645.100px"><span class="c">“</span>CopyConstruct.exe<span class="c">”</span>(Win32): <span class="c">已加载“</span>C:\Windows\System32\ucrtbased.dll<span class="c">”。“包括”</span>/<span class="c">“排除”设置禁用</span> /<span class="c">加载功能。</span></div>
<div class="out" style="left:155.4px;top:656.100px"><span class="c">程序“</span>[0x938] CopyConstruct.exe<span class="c">”已退出，返回值为</span> 0 (0x0)<span class="c">。</span></div>

<div style="left:1217.200px;top:650.500px;border:3px solid transparent;border-bottom:3.500px solid #8b90a0;border-top:0"></div>
<div style="left:1217.200px;top:658.900px;width:6px;height:5px;background:#c3c6d3"></div>
<div style="left:1217.200px;top:668.300px;border:3px solid transparent;border-top:3.500px solid #8b90a0;border-bottom:0"></div>
<div style="left:146px;top:676px;width:1081.200px;height:12.500px;background:#e8e9ee"></div>
<div style="left:150px;top:680px;border:2.500px solid transparent;border-right:3px solid #c0c4d0;border-left:0"></div>
<div style="left:1205px;top:680px;border:2.500px solid transparent;border-left:3px solid #c0c4d0;border-right:0"></div>
<div style="left:146px;top:689.5px;width:227px;height:14.300px;background:#3f5478"></div>
<div style="left:289.5px;top:689.5px;width:24.500px;height:14.300px;background:#fff"></div>
<div class="t" style="left:150px;top:690.5px;color:#fff;font-size:8.500px">任务运行程序资源管理器</div>
<div class="t" style="left:251px;top:690.5px;color:#fff;font-size:8.500px">错误列表</div>
<div class="t" style="left:293.5px;top:690.5px;color:#111;font-size:8.500px">输出</div>
<div class="t" style="left:318px;top:690.5px;color:#fff;font-size:8.500px">查找符号结果</div>
<div style="left:0;top:707.700px;width:1364.500px;height:19px;background:#0076d5"></div>
<div class="sb" style="left:0px;font-size:8.500px">已保存的项</div>
<div class="sb" style="left:826px">行 13</div>
<div class="sb" style="left:891px">列 96</div>
<div class="sb" style="left:957px">字符 56</div>
<div class="sb" style="left:1053px">Ins</div>
<svg style="left:1316px;top:713.500px" width="8" height="9" viewBox="0 0 8 9"><path d="M4 8.500V1.500M1 4l3-3 3 3" stroke="#fff" stroke-width="1.300" fill="none"/></svg>
<div class="sb" style="left:1330.500px;font-size:8.400px">发布</div>
<div style="left:1352px;top:715.500px;border:2.500px solid transparent;border-bottom:3px solid #fff;border-top:0"></div>
<div style="left:0;top:726px;width:1366px;height:42px;background:#000"></div>
<div style="left:0;top:726.500px;width:1364.500px;height:28.300px;background:#090909"></div>
<svg style="left:8px;top:735px" width="12" height="12" viewBox="0 0 12 12"><path d="M0 1.700l5-.700v4.700H0zM5.800 0.900L12 0v5.700H5.800zM0 6.400h5v4.700l-5-.700zM5.800 6.400H12V12l-6.200-.900z" fill="#fff"/></svg>
<div style="left:31px;top:726px;width:246px;height:29px;background:#f3f3f3"></div>
<div style="left:38px;top:733px;width:15px;height:15px;border:2.200px solid #111;border-radius:50%"></div>
<div class="t" style="left:60px;top:736px;font-size:10px;color:#3c3c3c">在这里输入你要搜索的内容</div>
<svg style="left:258px;top:733px" width="9" height="14" viewBox="0 0 9 14"><rect x="2.500" y="0.500" width="4" height="8" rx="2" fill="none" stroke="#444" stroke-width="1"/><path d="M0.800 6.500c0 5 7.400 5 7.400 0M4.500 10.500v3" stroke="#444" stroke-width="1" fill="none"/></svg>
<div style="left:283px;top:733px;width:1px;height:15px;background:#2c2c2c"></div>
<div style="left:434px;top:726.5px;width:33.500px;height:28px;background:#38373f"></div>

<svg style="left:302.500px;top:732px" width="16" height="17" viewBox="0 0 18 19"><rect x="1" y="1" width="16" height="12" fill="#3d9be0" stroke="#cfd8e6" stroke-width="1.500"/><rect x="5" y="4" width="7" height="7" fill="#8fd0f5"/><rect x="6" y="14" width="6" height="2" fill="#bfc8d6"/><rect x="10" y="10" width="7" height="7" fill="#e0b050"/></svg>
<svg style="left:336px;top:732px" width="18" height="18" viewBox="0 0 18 18"><circle cx="9" cy="9" r="8.500" fill="#e33e2b"/><path d="M9 9L1.600 4.800A8.500 8.500 0 0 0 5 16.500z" fill="#2ca14a"/><path d="M9 9l-4 7.500A8.500 8.500 0 0 0 17.500 9z" fill="#f7c61a"/><path d="M9 9h8.500A8.500 8.500 0 0 0 1.600 4.800z" fill="#e33e2b"/><circle cx="9" cy="9" r="4" fill="#fff"/><circle cx="9" cy="9" r="3.100" fill="#3b7ded"/></svg>
<svg style="left:371px;top:732px" width="18" height="18" viewBox="0 0 18 18"><circle cx="5.500" cy="5.500" r="4" fill="#7fc241"/><circle cx="12.500" cy="5.500" r="4" fill="#9ad455"/><circle cx="5.500" cy="12" r="4" fill="#5fa832"/><circle cx="12.500" cy="12" r="4" fill="#7fc241"/><path d="M9 9l4 8" stroke="#4a8a22" stroke-width="1.500"/></svg>
<svg style="left:406px;top:731px" width="19" height="19" viewBox="0 0 19 19"><rect x="0.500" y="0.500" width="18" height="18" rx="3" fill="#2b6be0"/><path d="M3.500 5l2.500 9 3.500-7 3.500 7 2.500-9" stroke="#fff" stroke-width="2" fill="none"/></svg>
<svg style="left:443px;top:733.200px" width="15.500" height="15.500" viewBox="0 0 18 18"><defs><linearGradient id="vsg" x1="0" y1="0" x2="0" y2="1"><stop offset=".55" stop-color="#fff"/><stop offset="1" stop-color="#b98fd6"/></linearGradient></defs><path d="M13 0.500l4.500 2v13l-4.500 2-8-6.500-3 2.500-1.500-1V5.500L2 4.500l3 2.500zM13 5.500L8 9l5 3.500zM2 7v4l2-2z" fill="url(#vsg)" fill-rule="evenodd"/></svg>
<svg style="left:476px;top:732px" width="18" height="18" viewBox="0 0 18 18"><circle cx="9" cy="9" r="8" fill="#1a1a1a" stroke="#a8a8a8" stroke-width="1.300"/><circle cx="9" cy="9" r="5.500" fill="#f01010"/></svg>
<div style="left:331px;top:753.700px;width:29px;height:1.200px;background:#6aa6dc"></div><div style="left:365.5px;top:753.700px;width:28.5px;height:1.200px;background:#6aa6dc"></div><div style="left:401.5px;top:753.700px;width:27px;height:1.200px;background:#6aa6dc"></div><div style="left:472px;top:753.700px;width:27px;height:1.200px;background:#6aa6dc"></div><div style="left:434px;top:753.700px;width:33.5px;height:1.200px;background:#8cc4f0"></div>
<div style="left:1242px;top:733px;width:1px;height:15px;background:#333"></div>
<div class="t" style="left:1254px;top:733.500px;font-size:7.500px;font-weight:bold;color:#eee;font-family:'Liberation Mono',monospace">CH</div>
<div style="left:1269px;top:734px;width:10px;height:11px;background:#f2f2f2;color:#111;font-size:9.500px;font-weight:bold;line-height:11px;text-align:center">M</div>
<svg style="left:1299px;top:737px" width="10" height="7" viewBox="0 0 10 7"><path d="M1 6l4-4.500L9 6" stroke="#eee" stroke-width="1.300" fill="none"/></svg>
<svg style="left:1315px;top:734px" width="12" height="12" viewBox="0 0 12 12"><circle cx="7" cy="5" r="3.200" fill="none" stroke="#f08a1c" stroke-width="2"/><path d="M4.500 7.500L1 11" stroke="#f08a1c" stroke-width="2.200"/></svg>
<svg style="left:1332.500px;top:735px" width="11" height="11" viewBox="0 0 12 12"><circle cx="6" cy="6" r="5.500" fill="#2c8ad8"/><circle cx="6" cy="6" r="3" fill="#bfe0f8"/><rect x="5.300" y="3" width="1.400" height="6" fill="#1c5fa8"/></svg>
<svg style="left:1349px;top:734.500px" width="12" height="12" viewBox="0 0 12 12"><path d="M1 4.500h2.500l3-3v9l-3-3H1z" fill="#ddd"/><path d="M8 3.500c1.500 1.500 1.500 3.500 0 5M9.500 2c2.500 2.500 2.500 5.500 0 8" stroke="#eee" stroke-width=".9" fill="none"/></svg>
<div style="left:1250px;top:657.500px;width:95px;height:1px;background:#f1f1f1"></div>
<svg style="left:1262px;top:608px" width="76" height="68" viewBox="0 0 76 68">
<defs><filter id="sh" x="-20%" y="-20%" width="140%" height="150%"><feGaussianBlur in="SourceAlpha" stdDeviation="1.600"/><feOffset dy="1.200"/><feComponentTransfer><feFuncA type="linear" slope=".28"/></feComponentTransfer><feMerge><feMergeNode/><feMergeNode in="SourceGraphic"/></feMerge></filter></defs>
<g filter="url(#sh)"><path d="M27.500 9.500l5.500 7M48 9.500l-5.500 7" stroke="#fff" stroke-width="4.500" stroke-linecap="round"/>
<rect x="10" y="15" width="55.500" height="44.500" rx="10" fill="#fff"/></g>
<path d="M31 29v17.500a1.800 1.800 0 0 0 2.700 1.500l13.500-8.700a1.800 1.800 0 0 0 0-3.100l-13.500-8.700a1.800 1.800 0 0 0-2.700 1.500z" fill="#f3f3f3" stroke="#e6e6e6" stroke-width="1.200" stroke-linejoin="round"/>
</svg>
<svg style="left:964px;top:213px" width="8" height="13" viewBox="0 0 8 13"><path d="M1 0.500c2 0 3 .5 3 1.500v9c0 1-1 1.500-3 1.500M7 0.500c-2 0-3 .5-3 1.500M4 11c0 1 1 1.500 3 1.500M2.500 6.500h3" stroke="#333" stroke-width=".9" fill="none"/></svg>
<div style="left:1364.500px;top:0;width:1.500px;height:768px;background:#1c1f2c"></div>

</div>
</body></html>
